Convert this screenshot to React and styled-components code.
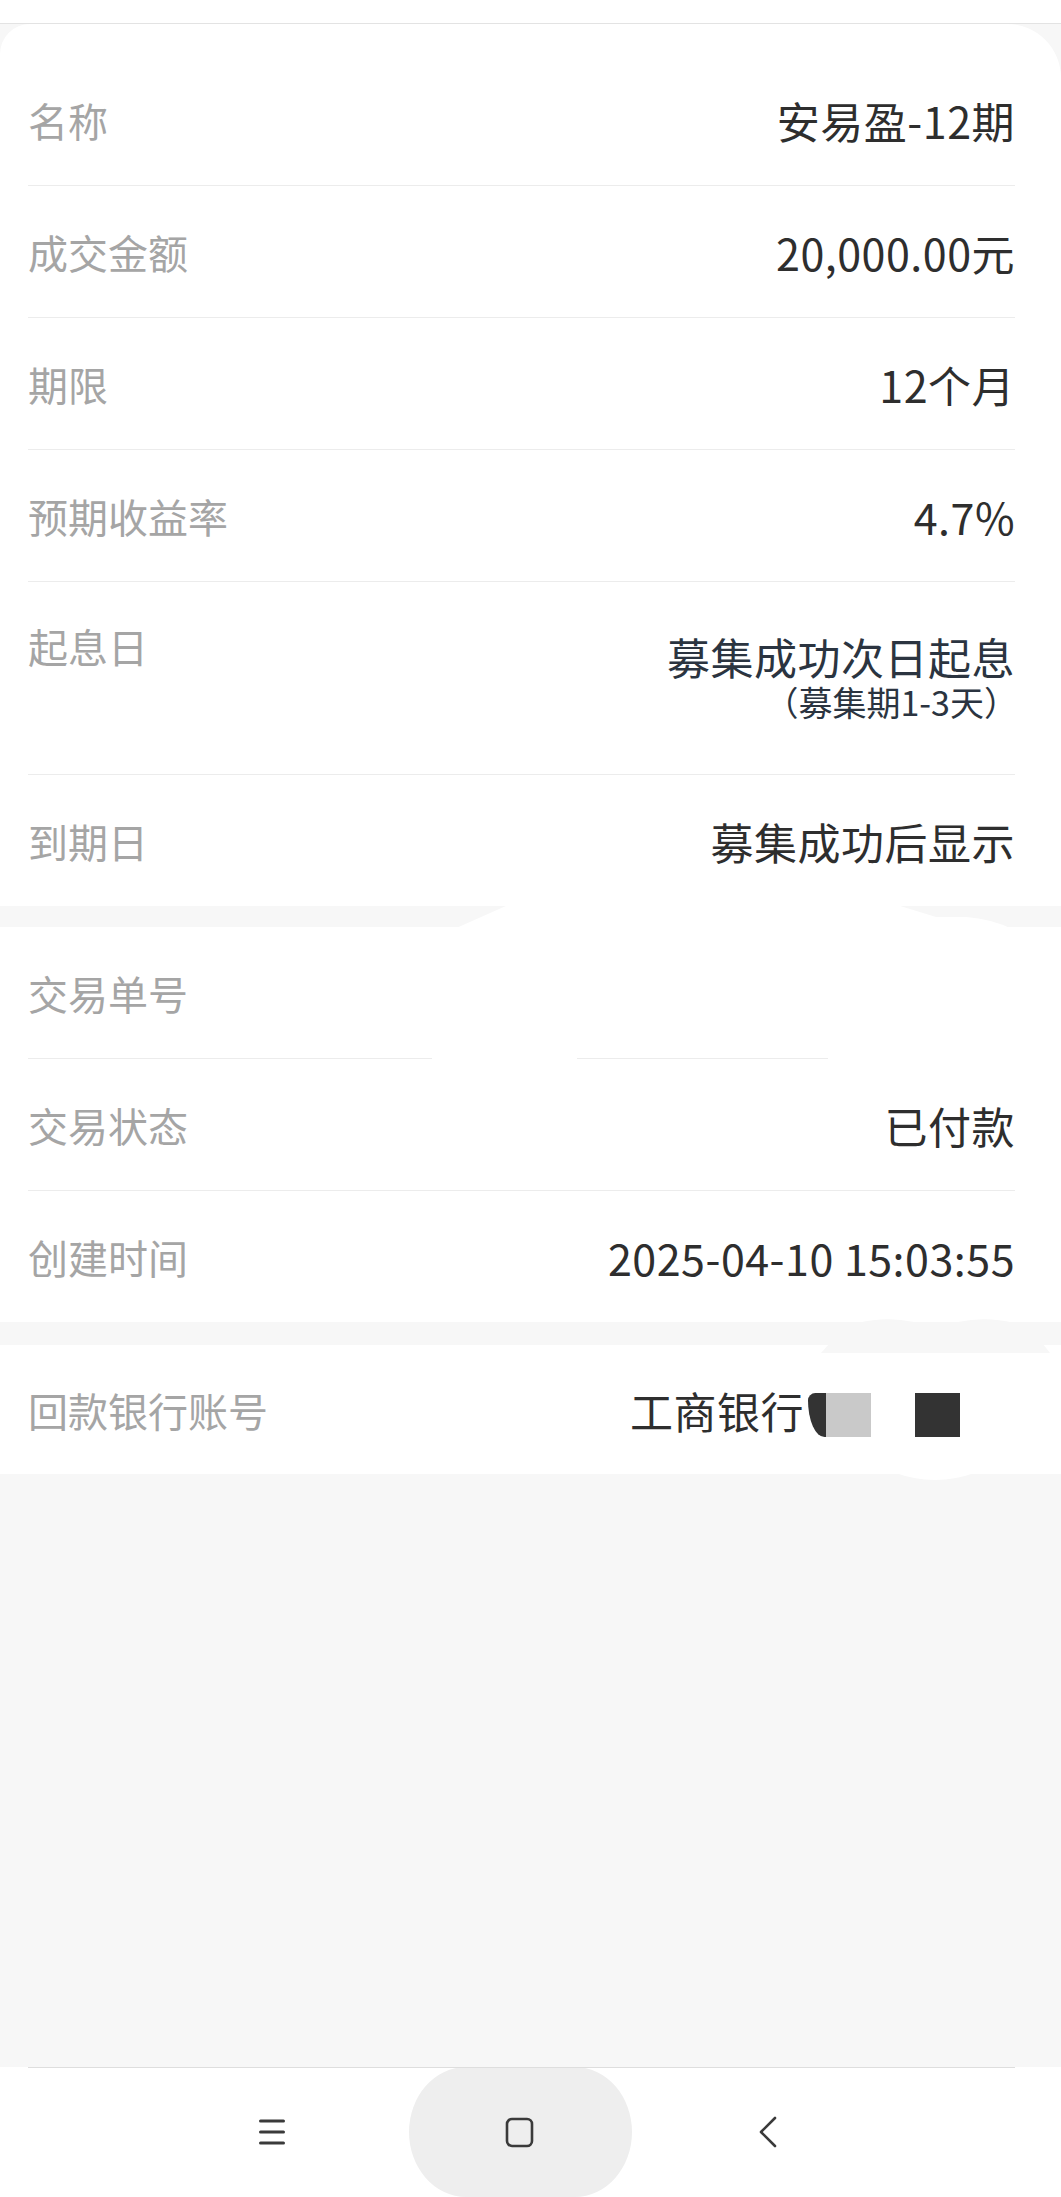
import React from "react"
import styled, { createGlobalStyle } from "styled-components"

const GlobalStyle = createGlobalStyle`
  html, body {
    margin: 0;
    padding: 0;
    background: #f7f7f7;
  }
  body {
    font-family: "Noto Sans CJK SC", "Noto Sans", sans-serif;
  }
`

const infoRows = [
  { label: "名称", value: "安易盈-12期" },
  { label: "成交金额", value: "20,000.00元" },
  { label: "期限", value: "12个月" },
  { label: "预期收益率", value: "4.7%" },
]

const tradeRows = [
  { label: "交易单号", value: "" },
  { label: "交易状态", value: "已付款" },
  { label: "创建时间", value: "2025-04-10 15:03:55" },
]

const App = () => {
  return (
    <Page>
      <GlobalStyle />
      <TopStrip />
      <Content>
        <Card $first>
          {infoRows.map((r) => (
            <Row key={r.label}>
              <Label>{r.label}</Label>
              <Value>{r.value}</Value>
            </Row>
          ))}
          <Row $tall>
            <Label>起息日</Label>
            <ValueStack>
              <Value $navy>募集成功次日起息</Value>
              <SubValue>（募集期1-3天）</SubValue>
            </ValueStack>
          </Row>
          <Row $last>
            <Label>到期日</Label>
            <Value>募集成功后显示</Value>
          </Row>
        </Card>

        <Card>
          {tradeRows.map((r, i) => (
            <Row key={r.label} $last={i === tradeRows.length - 1}>
              <Label>{r.label}</Label>
              <Value>{r.value}</Value>
            </Row>
          ))}
        </Card>

        <Card $shifted>
          <Row $last $short>
            <Label>回款银行账号</Label>
            <BankValue>
              <Value>工商银行</Value>
              <MaskEdge />
              <MaskBlock $light />
              <MaskBlock $gap />
              <MaskBlock />
            </BankValue>
          </Row>
        </Card>
      </Content>

      <Filler />

      <NavBar>
        <NavSlot>
          <svg width="28" height="28" viewBox="0 0 28 28">
            <g stroke="#3a3a3a" strokeWidth="3" strokeLinecap="round">
              <line x1="2.5" y1="3" x2="25.5" y2="3" />
              <line x1="2.5" y1="14" x2="25.5" y2="14" />
              <line x1="2.5" y1="25" x2="25.5" y2="25" />
            </g>
          </svg>
        </NavSlot>
        <NavSlot $pill>
          <svg width="30" height="31" viewBox="0 0 30 31">
            <rect x="2" y="2" width="25" height="27" rx="5" fill="none" stroke="#3a3a3a" strokeWidth="2.6" />
          </svg>
        </NavSlot>
        <NavSlot>
          <svg width="20" height="32" viewBox="0 0 20 32">
            <polyline points="17,2 3,16 17,30" fill="none" stroke="#3a3a3a" strokeWidth="2.6" strokeLinecap="round" strokeLinejoin="round" />
          </svg>
        </NavSlot>
      </NavBar>

      {/* smudges left over from the redacted order / account numbers */}
      <Redaction width="1061" height="2197" viewBox="0 0 1061 2197">
        <path d="M508 905 L897 905 L936 917 L966 917 Q992 919 1012 929 L454 929 Z" fill="#ffffff" />
        <rect x="432" y="1053" width="145" height="10" fill="#ffffff" />
        <rect x="828" y="1053" width="200" height="10" fill="#ffffff" />
        <path d="M858 1323 Q886 1316 914 1322 L958 1322 Q986 1316 1014 1323 Z" fill="#f7f7f7" />
        <path d="M829 1344 L1043 1344 L1050 1353 L821 1353 Z" fill="#f7f7f7" />
        <path d="M893 1472 Q935 1488 977 1472 Z" fill="#ffffff" />
      </Redaction>
    </Page>
  )
}

export default App

const Page = styled.div`
  position: relative;
  display: flex;
  flex-direction: column;
  min-height: 2197px;
  background: #f7f7f7;
  overflow: hidden;
`

const TopStrip = styled.div`
  height: 23px;
  background: #ffffff;
  border-bottom: 1px solid #e3e3e3;
`

const Content = styled.div`
  display: flex;
  flex-direction: column;
  row-gap: 21px;
`

const Card = styled.section`
  background: #ffffff;
  padding: ${(p) => (p.$first ? "30px 46px 0 28px" : "0 46px 0 28px")};
  margin-top: ${(p) => (p.$shifted ? "2px" : "0")};
  border-radius: ${(p) => (p.$first ? "30px 54px 0 0" : "0")};
`

const Row = styled.div`
  display: flex;
  justify-content: space-between;
  align-items: ${(p) => (p.$tall ? "flex-start" : "center")};
  box-sizing: border-box;
  height: ${(p) => (p.$tall ? "193px" : p.$short ? "129px" : p.$last ? "131px" : "132px")};
  padding-top: ${(p) => (p.$tall ? "36px" : "0")};
  border-bottom: ${(p) => (p.$last ? "none" : "1px solid #ececec")};
`

const Label = styled.span`
  font-size: 40px;
  line-height: 56px;
  color: #a5a5a5;
  white-space: nowrap;
`

const Value = styled.span`
  font-size: 43px;
  line-height: 56px;
  color: ${(p) => (p.$navy ? "#2b3440" : "#2e2e2e")};
  white-space: nowrap;
  letter-spacing: 0.5px;
`

const ValueStack = styled.div`
  display: flex;
  flex-direction: column;
  align-items: flex-end;
  margin-top: 10px;
`

const SubValue = styled.span`
  font-size: 34px;
  line-height: 36px;
  color: #2b3440;
  margin-right: -3px;
  white-space: nowrap;
`

const BankValue = styled.div`
  display: flex;
  align-items: center;
  margin-right: 55px;
`

const MaskEdge = styled.span`
  display: block;
  width: 18px;
  height: 44px;
  margin-left: 4px;
  margin-top: 10px;
  background: #333333;
  border-radius: 8px 0 0 18px / 8px 0 0 40px;
`

const MaskBlock = styled.span`
  display: block;
  width: ${(p) => (p.$gap ? "44px" : "45px")};
  height: 44px;
  margin-top: 10px;
  background: ${(p) => (p.$light ? "#c9c9c9" : p.$gap ? "transparent" : "#333333")};
`

const Filler = styled.div`
  flex: 1;
`

const NavBar = styled.nav`
  display: flex;
  justify-content: center;
  column-gap: 25px;
  height: 130px;
  padding-right: 21px;
  background: #ffffff;
  position: relative;

  &::before {
    content: "";
    position: absolute;
    top: 0;
    left: 28px;
    right: 46px;
    height: 1px;
    background: #dedede;
  }
`

const NavSlot = styled.div`
  display: flex;
  align-items: center;
  justify-content: center;
  width: 223px;
  height: 130px;
  background: ${(p) => (p.$pill ? "#eeeeee" : "transparent")};
  border-radius: ${(p) => (p.$pill ? "57px / 65px" : "0")};
`

const Redaction = styled.svg`
  position: absolute;
  top: 0;
  left: 0;
  pointer-events: none;
`
